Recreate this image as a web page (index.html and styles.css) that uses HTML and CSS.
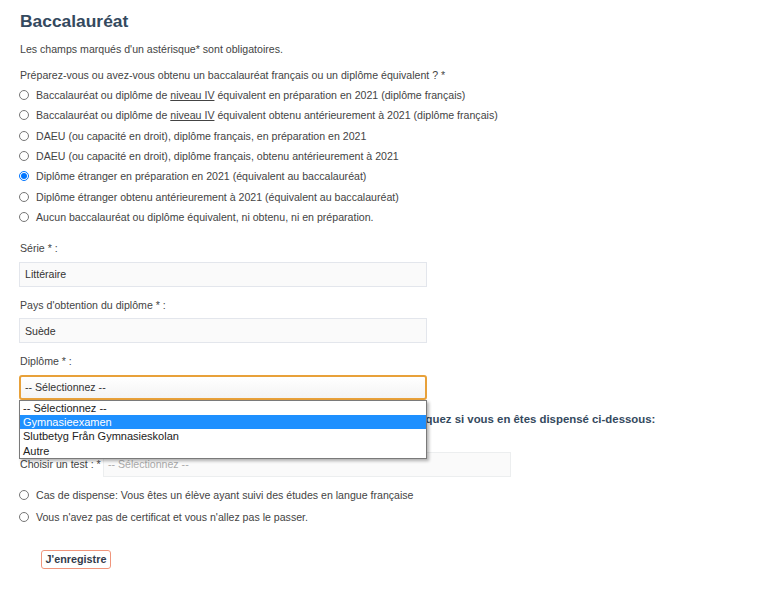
FILE: index.html
```html
<!DOCTYPE html>
<html lang="fr">
<head>
<meta charset="utf-8">
<title>Baccalauréat</title>
<link rel="stylesheet" href="styles.css">
</head>
<body>
<main class="page">
  <h1 class="title">Baccalauréat</h1>
  <p class="note">Les champs marqués d'un astérisque* sont obligatoires.</p>

  <div class="group">
    <p class="question">Préparez-vous ou avez-vous obtenu un baccalauréat français ou un diplôme équivalent ? *</p>
    <label class="radio"><input type="radio" name="bac"><span>Baccalauréat ou diplôme de <u>niveau IV</u> équivalent en préparation en 2021 (diplôme français)</span></label>
    <label class="radio"><input type="radio" name="bac"><span>Baccalauréat ou diplôme de <u>niveau IV</u> équivalent obtenu antérieurement à 2021 (diplôme français)</span></label>
    <label class="radio"><input type="radio" name="bac"><span>DAEU (ou capacité en droit), diplôme français, en préparation en 2021</span></label>
    <label class="radio"><input type="radio" name="bac"><span>DAEU (ou capacité en droit), diplôme français, obtenu antérieurement à 2021</span></label>
    <label class="radio"><input type="radio" name="bac" checked><span>Diplôme étranger en préparation en 2021 (équivalent au baccalauréat)</span></label>
    <label class="radio"><input type="radio" name="bac"><span>Diplôme étranger obtenu antérieurement à 2021 (équivalent au baccalauréat)</span></label>
    <label class="radio"><input type="radio" name="bac"><span>Aucun baccalauréat ou diplôme équivalent, ni obtenu, ni en préparation.</span></label>
  </div>

  <div class="field">
    <label class="field-label">Série * :</label>
    <div class="input">Littéraire</div>
  </div>
  <div class="field">
    <label class="field-label">Pays d'obtention du diplôme * :</label>
    <div class="input">Suède</div>
  </div>
  <div class="field field-last">
    <label class="field-label">Diplôme * :</label>
    <div class="select-wrap">
      <div class="select select-open">-- Sélectionnez --</div>
      <ul class="listbox">
        <li class="option">-- Sélectionnez --</li>
        <li class="option option-active">Gymnasieexamen</li>
        <li class="option">Slutbetyg Från Gymnasieskolan</li>
        <li class="option">Autre</li>
      </ul>
    </div>
  </div>

  <h2 class="subhead">Test de connaissance de la langue française : choisissez votre test, ou indiquez si vous en êtes dispensé ci-dessous:</h2>

  <div class="test-row">
    <label class="test-label">Choisir un test : *</label>
    <div class="select select-disabled">-- Sélectionnez --</div>
  </div>

  <div class="group2">
    <label class="radio radio-wide"><input type="radio" name="disp"><span>Cas de dispense: Vous êtes un élève ayant suivi des études en langue française</span></label>
    <label class="radio radio-wide"><input type="radio" name="disp"><span>Vous n'avez pas de certificat et vous n'allez pas le passer.</span></label>
  </div>

  <button class="save" type="button">J'enregistre</button>
</main>
</body>
</html>
```

FILE: styles.css
```css
* { box-sizing: border-box; }
html, body { margin: 0; padding: 0; background: #fff; }
body {
  font-family: "Liberation Sans", Arial, sans-serif;
  font-size: 10.6px;
  color: #444;
}
.page { padding: 10px 20px 0 20px; }
.title {
  margin: 0;
  font-size: 17.4px;
  line-height: 22px;
  font-weight: bold;
  color: #34495e;
}
.note { margin: 10px 0 0; line-height: 14px; }
.group { margin: 12px 0 14px; }
.question { margin: 0 0 3px; line-height: 14px; }
.radio {
  display: flex;
  align-items: center;
  height: 20.33px;
  line-height: 14px;
}
.radio input {
  width: 10px;
  height: 10px;
  margin: 0 7px 0 -1px;
  flex: none;
}
.radio u { text-decoration: underline; }
.field { margin-bottom: 11px; }
.field-last { margin-bottom: 0; }
.field-label { display: block; line-height: 14px; margin-bottom: 6.5px; }
.input {
  width: 408px;
  height: 25px;
  margin-left: -1px;
  padding: 0 5px;
  display: flex;
  align-items: center;
  background: #fafafa;
  border: 1px solid #e3e6ec;
  color: #333;
}
.select-wrap { position: relative; width: 408px; margin-left: -1px; }
.select {
  height: 25px;
  display: flex;
  align-items: center;
  padding: 0 4px;
}
.select-open {
  border: 2px solid #e8a13a;
  border-radius: 3px;
  background: linear-gradient(#fff, #f4f4f4);
  color: #333;
}
.listbox {
  position: absolute;
  left: 0;
  top: 25px;
  width: 408px;
  margin: 0;
  padding: 0;
  list-style: none;
  background: #fff;
  border: 1px solid #7a7a7a;
  box-shadow: 2px 2px 3px rgba(0,0,0,0.3);
  z-index: 5;
}
.option {
  height: 14.3px;
  line-height: 14.3px;
  padding: 0 3px;
  font-size: 11px;
  color: #222;
}
.option-active { background: #1e90ff; color: #fff; }
.subhead {
  margin: 11px 0 0;
  font-size: 11.4px;
  line-height: 16px;
  font-weight: bold;
  color: #34495e;
  white-space: nowrap;
}
.test-row {
  display: flex;
  align-items: center;
  margin-top: 25px;
}
.test-label { width: 83px; flex: none; line-height: 14px; }
.select-disabled {
  width: 408px;
  background: #fafafa;
  border: 1px solid #eceeef;
  color: #aaa;
}
.group2 { margin-top: 7px; }
.radio-wide { height: 22px; }
.save {
  display: block;
  margin: 22px 0 0 21px;
  width: 70px;
  height: 19px;
  padding: 0;
  font-family: "Liberation Sans", Arial, sans-serif;
  font-size: 10.8px;
  font-weight: bold;
  color: #333b4a;
  background: #fff;
  border: 1.5px solid #f0957c;
  border-radius: 3px;
}
```
